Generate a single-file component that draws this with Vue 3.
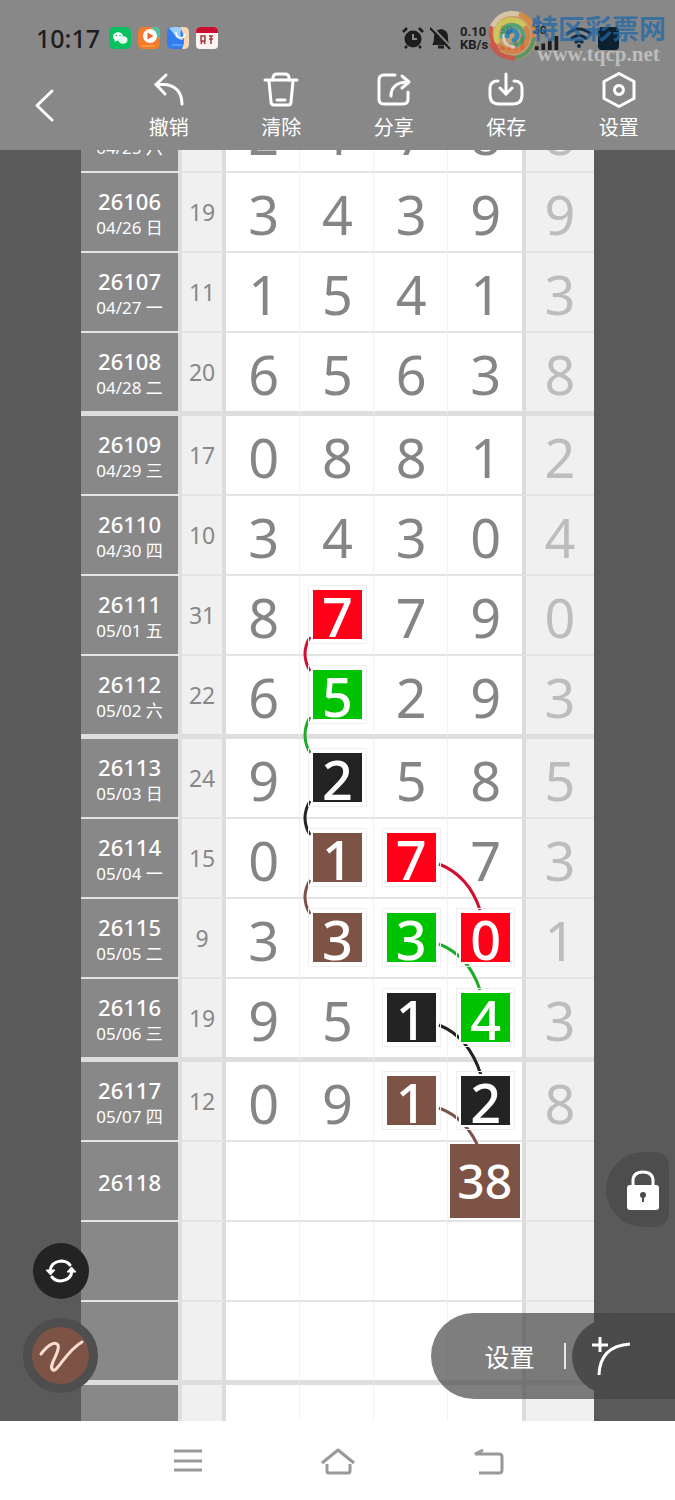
<script setup>
const tools = [
  { label: '撤销', paths: ['M15 3L5 12.5L14 22', 'M5 12.5H12C24 12.5 31 20 31 32'] },
  {
    label: '清除',
    paths: [
      'M2 8H34',
      'M10 8V6Q10 2 14 2H22Q26 2 26 6V8',
      'M6 9L8 30Q8.3 33 11 33H25Q28 33 28 30L30 9',
      'M14 28H22',
    ],
  },
  {
    label: '分享',
    paths: [
      'M19 3H8Q3 3 3 8V27Q3 32 8 32H27Q32 32 32 27V20',
      'M15 24C15 15 21 10 32 10',
      'M26 4L33 10L26 16',
    ],
  },
  {
    label: '保存',
    paths: ['M10 9Q2 9 2 16V23Q2 32 11 32H25Q34 32 34 23V16Q34 9 26 9', 'M18 2V22', 'M12 16L18 22L24 16'],
  },
  {
    label: '设置',
    paths: ['M18 1.5L33 9.5V26.5L18 34.5L3 26.5V9.5Z', 'M18 13.5A4.5 4.5 0 1 1 17.9 13.5Z'],
  },
]

const raw = [
  ['26105', '04/25 六', '', '2', '1', '7', '8', '8'],
  ['26106', '04/26 日', '19', '3', '4', '3', '9', '9'],
  ['26107', '04/27 一', '11', '1', '5', '4', '1', '3'],
  ['26108', '04/28 二', '20', '6', '5', '6', '3', '8'],
  ['26109', '04/29 三', '17', '0', '8', '8', '1', '2'],
  ['26110', '04/30 四', '10', '3', '4', '3', '0', '4'],
  ['26111', '05/01 五', '31', '8', '7', '7', '9', '0'],
  ['26112', '05/02 六', '22', '6', '5', '2', '9', '3'],
  ['26113', '05/03 日', '24', '9', '2', '5', '8', '5'],
  ['26114', '05/04 一', '15', '0', '1', '7', '7', '3'],
  ['26115', '05/05 二', '9', '3', '3', '3', '0', '1'],
  ['26116', '05/06 三', '19', '9', '5', '1', '4', '3'],
  ['26117', '05/07 四', '12', '0', '9', '1', '2', '8'],
  ['26118', '', '', '', '', '', '', ''],
  ['', '', '', '', '', '', '', ''],
  ['', '', '', '', '', '', '', ''],
  ['', '', '', '', '', '', '', ''],
]

const marks = {
  '26111-1': 'red',
  '26112-1': 'green',
  '26113-1': 'black',
  '26114-1': 'brown',
  '26114-2': 'red',
  '26115-1': 'brown',
  '26115-2': 'green',
  '26115-3': 'red',
  '26116-2': 'black',
  '26116-3': 'green',
  '26117-2': 'brown',
  '26117-3': 'black',
}

const rows = raw.map(([issue, date, sum, ...digits], i) => ({
  issue,
  date,
  sum,
  tail: digits[4],
  cells: digits.slice(0, 4).map((value, c) => ({ value, mark: marks[issue + '-' + c] })),
  thick: i % 4 === 3,
}))

const links = [
  { tone: 'red', d: 'M229 544Q219 561 229 578' },
  { tone: 'green', d: 'M229 624Q219 642 229 660' },
  { tone: 'black', d: 'M229 708Q219 725 229 742' },
  { tone: 'brown', d: 'M229 787Q219 804 229 821' },
  { tone: 'red', d: 'M358 771Q388 783 399 817' },
  { tone: 'green', d: 'M358 851Q388 863 399 897' },
  { tone: 'black', d: 'M358 932Q388 944 400 982' },
  { tone: 'brown', d: 'M358 1015Q386 1025 399 1058' },
]
</script>

<template>
  <div class="screen">
    <header class="top">
      <div class="status">
        <span class="clock">10:17</span>
        <div class="apps">
          <svg viewBox="0 0 22 22">
            <rect width="22" height="22" rx="5" fill="#07c160" />
            <ellipse cx="9" cy="9.5" rx="5" ry="4.2" fill="#fff" />
            <ellipse cx="14" cy="13" rx="4.5" ry="3.7" fill="#e2f8ea" />
            <path d="M6 12L5.500 15L9 13Z" fill="#fff" />
            <circle cx="7.500" cy="8.500" r=".8" fill="#07c160" />
            <circle cx="11" cy="8.500" r=".8" fill="#07c160" />
          </svg>
          <svg viewBox="0 0 22 22">
            <rect width="22" height="22" rx="5" fill="#f47a2c" />
            <path d="M13 0H17Q22 0 22 5V13Z" fill="#4fc3a1" />
            <circle cx="12" cy="9" r="7" fill="#fff" />
            <path d="M9.500 5.500L15.500 9L9.500 12.500Z" fill="#f0642c" />
            <path d="M4 19H17" stroke="#f79a3c" stroke-width="2" />
          </svg>
          <svg viewBox="0 0 22 22">
            <rect width="22" height="22" rx="5" fill="#2f7df0" />
            <path d="M13 0H17Q22 0 22 5V17Q22 22 17 22H15Q20 12 13 0Z" fill="#f6d7b4" />
            <path d="M2 1Q9 -1 15 1Q11 9 17 13Q10 13 7 7Z" fill="#9ed0ff" />
            <path d="M9 5Q9 11 14 11Q17 11 18 7" fill="none" stroke="#fff" stroke-width="1.500" />
            <path d="M5 18H15" stroke="#6fa8f4" stroke-width="1.500" />
          </svg>
          <svg viewBox="0 0 22 22">
            <rect width="22" height="22" rx="4" fill="#fff4f2" />
            <path d="M0 6V4Q0 0 4 0H18Q22 0 22 4V6Z" fill="#c8102e" />
            <path d="M5 9H9V14H5ZM13 9H17M13 12H17M15 9V17M5 17L6 14M9 17L8 14" fill="none" stroke="#a23a3a" stroke-width="1.500" />
          </svg>
        </div>
        <div class="signals">
          <svg class="glyph" viewBox="0 0 22 24">
            <circle cx="11" cy="13" r="8.500" fill="#1d1d1d" />
            <path d="M1 6L5 2M21 6L17 2M5 20L3 22M17 20L19 22" stroke="#1d1d1d" stroke-width="2.500" />
            <path d="M11 8V13H15" fill="none" stroke="#888" stroke-width="2" />
          </svg>
          <svg class="glyph" viewBox="0 0 22 24">
            <path d="M2 19Q4 17 4 11Q4 4 11 3Q18 4 18 11Q18 17 20 19Z" fill="#1d1d1d" />
            <path d="M8 21H14" stroke="#1d1d1d" stroke-width="3" />
            <path d="M2 1L22 22" stroke="#888" stroke-width="2" />
            <path d="M0 2L20 23" stroke="#1d1d1d" stroke-width="2" />
          </svg>
          <span class="speed">0.10<br />KB/s</span>
          <span class="net">
            <small>5G</small>
            <svg viewBox="0 0 26 16"><path d="M2 16V12M9 16V9M16 16V6M23 16V1" stroke="#a8262e" stroke-width="4" /></svg>
          </span>
          <span class="net">
            <small>5G</small>
            <svg viewBox="0 0 26 16"><path d="M2 16V12M9 16V9M16 16V6M23 16V1" stroke="#1d1d1d" stroke-width="4" /></svg>
          </span>
          <svg class="wifi" viewBox="0 0 26 22">
            <path d="M1 7Q13 -3 25 7M5 12Q13 5 21 12M9 16Q13 12 17 16" fill="none" stroke="#142c40" stroke-width="3" />
            <circle cx="13" cy="19" r="2" fill="#142c40" />
          </svg>
          <span class="battery"></span>
        </div>
      </div>

      <div class="brand">
        <svg viewBox="0 0 50 50">
          <circle cx="25" cy="25" r="24" fill="#d9a868" />
          <g fill="none" stroke-linecap="round">
            <path d="M5 14Q15 -2 33 4" stroke="#f0d8b0" stroke-width="5" />
            <path d="M33 4Q48 11 46 28" stroke="#f08a2c" stroke-width="5" />
            <path d="M46 28Q42 45 25 47" stroke="#4f9a58" stroke-width="4" />
            <path d="M4 34Q10 46 25 47" stroke="#d84a38" stroke-width="5" />
            <path d="M3 17Q1 30 10 38" stroke="#e24a3a" stroke-width="4" />
            <path d="M9 30Q5 14 20 9Q32 8 38 17" stroke="#e4dc4c" stroke-width="5" />
            <path d="M38 17Q44 31 30 40Q18 42 12 35" stroke="#e8823a" stroke-width="5" />
            <path d="M14 26Q14 14 25 14Q36 16 35 27Q32 36 22 34" stroke="#3fae72" stroke-width="4" />
            <path d="M16 24Q14 34 26 36" stroke="#f3e8ce" stroke-width="3" />
            <path d="M19 25Q20 17 27 20Q32 25 26 29" stroke="#1f86c4" stroke-width="5" />
          </g>
        </svg>
        <div class="brand-text">
          <strong>特区彩票网</strong>
          <span>www.tqcp.net</span>
        </div>
      </div>

      <nav class="tools">
        <button class="back" aria-label="返回">
          <svg viewBox="0 0 36 36"><path d="M24 4L9 18.500L24 33" /></svg>
        </button>
        <button v-for="tool in tools" :key="tool.label" class="tool">
          <svg viewBox="0 0 36 36"><path v-for="d in tool.paths" :key="d" :d="d" /></svg>
          <span>{{ tool.label }}</span>
        </button>
      </nav>
    </header>

    <main class="stage">
      <div class="board">
        <table>
          <colgroup>
            <col class="c-issue" />
            <col class="c-sum" />
            <col class="c-digit" span="3" />
            <col class="c-last" />
            <col class="c-tail" />
          </colgroup>
          <tbody>
            <tr v-for="(row, i) in rows" :key="i" :class="{ thick: row.thick }">
              <th scope="row">
                <div class="issue">{{ row.issue }}</div>
                <div v-if="row.date" class="date">{{ row.date }}</div>
              </th>
              <td class="sum">{{ row.sum }}</td>
              <td v-for="(cell, c) in row.cells" :key="c" class="digit">
                <span v-if="cell.mark" class="tile" :class="cell.mark">{{ cell.value }}</span>
                <span v-else-if="row.issue === '26118' && c === 3" class="pick">38</span>
                <template v-else>{{ cell.value }}</template>
              </td>
              <td class="tail">{{ row.tail }}</td>
            </tr>
          </tbody>
        </table>
        <svg class="links" viewBox="0 0 513 1372" preserveAspectRatio="none">
          <path v-for="link in links" :key="link.d" :class="link.tone" :d="link.d" />
        </svg>
      </div>

      <button class="lock" aria-label="锁定">
        <svg viewBox="0 0 34 42">
          <path d="M7 18V12Q7 3 17 3Q27 3 27 12V18" fill="none" stroke="#fff" stroke-width="3" />
          <rect x="1" y="16" width="32" height="25" rx="3" fill="#fff" />
          <circle cx="17" cy="26" r="3" fill="#4d4d4d" />
          <path d="M17 27V33" stroke="#4d4d4d" stroke-width="2" />
        </svg>
      </button>

      <div class="left-actions">
        <button class="swap" aria-label="切换">
          <svg viewBox="0 0 32 28">
            <path d="M5 14Q6 5 16 4Q22 4 25 8M27 14Q26 23 16 24Q10 24 7 20" fill="none" stroke="#fff" stroke-width="3" stroke-linecap="round" />
            <path d="M1 13H10L5.500 18ZM22 15H31L26.500 10Z" fill="#fff" stroke="#fff" stroke-linejoin="round" />
          </svg>
        </button>
        <button class="pen" aria-label="画笔">
          <svg viewBox="0 0 56 56">
            <path d="M8 26C14 18 22 12 25 17C28 24 14 38 20 42C25 44 32 24 49 14" fill="none" stroke="#fbdcd2" stroke-width="3" stroke-linecap="round" />
          </svg>
        </button>
      </div>

      <div class="panel">
        <button class="panel-set">设置</button>
        <button class="curve" aria-label="曲线">
          <svg viewBox="0 0 42 42">
            <path d="M11 2V17M3 10H19M10 40Q11 11 41 9" fill="none" stroke="#fff" stroke-width="3" />
          </svg>
        </button>
      </div>
    </main>

    <footer class="system">
      <button aria-label="菜单">
        <svg viewBox="0 0 36 30"><path d="M4 5H32M4 15H32M4 24H32" /></svg>
      </button>
      <button aria-label="主页">
        <svg viewBox="0 0 36 30"><path d="M2 17L18 4L34 17M7 18V25Q7 27 9 27H28Q30 27 30 25V18" stroke-linejoin="round" /></svg>
      </button>
      <button aria-label="后退">
        <svg viewBox="0 0 36 30"><path d="M13 4L5 8H29Q32 8 32 11V24Q32 27 29 27H9" /></svg>
      </button>
    </footer>
  </div>
</template>

<style>
body {
  margin: 0;
}
</style>

<style scoped>
.screen {
  display: flex;
  flex-direction: column;
  height: 100vh;
  overflow: hidden;
  background: #fff;
  font-family: "Noto Sans", "Noto Sans CJK SC", sans-serif;
}
button {
  display: flex;
  align-items: center;
  justify-content: center;
  padding: 0;
  border: 0;
  background: none;
  color: #fff;
  font-family: "Noto Sans CJK SC", sans-serif;
}
.top {
  position: relative;
  flex: none;
  height: 150px;
  background: #888;
}
.status {
  display: flex;
  align-items: center;
  height: 64px;
  padding: 12px 56px 0 36px;
  box-sizing: border-box;
  color: #1d1d1d;
}
.clock {
  width: 65px;
  font: 500 25px/26px "Noto Sans", sans-serif;
}
.apps {
  display: flex;
  gap: 7px;
  margin-left: 8px;
}
.apps svg {
  width: 22px;
  height: 22px;
}
.signals {
  display: flex;
  align-items: center;
  gap: 6px;
  margin-left: auto;
}
.glyph {
  width: 22px;
  height: 24px;
}
.speed {
  width: 32px;
  margin-left: 2px;
  font: 700 13px/13px Roboto, sans-serif;
}
.net {
  display: flex;
  flex-direction: column;
  width: 26px;
  margin-left: 2px;
}
.net small {
  font: 700 10px/9px Roboto, sans-serif;
}
.net svg {
  height: 15px;
}
.wifi {
  width: 26px;
  height: 22px;
}
.battery {
  width: 21px;
  height: 23px;
  border-radius: 4px;
  background: #0c2030;
}
.brand {
  position: absolute;
  top: 10px;
  right: 9px;
  display: flex;
  opacity: 0.75;
}
.brand > svg {
  width: 50px;
  height: 52px;
}
.brand-text {
  display: flex;
  flex-direction: column;
  align-items: center;
  margin-left: -7px;
}
.brand strong {
  color: #2268a6;
  font: 700 27px/36px "Noto Sans CJK SC", sans-serif;
}
.brand span {
  color: #cfcfcf;
  font: 700 21px/16px "Liberation Serif", serif;
}
.tools {
  display: grid;
  grid-template-columns: repeat(6, 1fr);
  padding-top: 8px;
}
.tools svg {
  width: 36px;
  height: 36px;
  fill: none;
  stroke: #fff;
  stroke-width: 3;
  stroke-linecap: round;
  stroke-linejoin: round;
}
.back {
  justify-content: flex-start;
  height: 66px;
  padding-left: 28px;
}
.tool {
  flex-direction: column;
  gap: 5px;
  font-size: 20px;
  line-height: 28px;
}
.stage {
  position: relative;
  flex: 1;
  min-height: 0;
  overflow: hidden;
  background: #5a5a5a;
}
.board {
  position: relative;
  width: 76%;
  margin: -57px auto 0;
}
table {
  width: 100%;
  table-layout: fixed;
  border-spacing: 0;
  background: #fff;
}
.c-issue {
  width: 19.7%;
}
.c-sum {
  width: 8.6%;
}
.c-digit {
  width: 14.4%;
}
.c-last {
  width: 15.2%;
}
tr {
  height: 80px;
}
tr.thick {
  height: 83px;
}
th,
td {
  box-sizing: border-box;
  padding: 0;
  border-bottom: 2px solid #e4e4e4;
  text-align: center;
  vertical-align: middle;
}
.thick th,
.thick td {
  border-bottom: 5px solid #dedede;
}
th {
  padding-top: 2px;
  border-right: 4px solid #dedede;
  background: #888;
  color: #fff;
  font-weight: 400;
}
.issue {
  font-size: 22px;
  font-weight: 500;
  line-height: 28px;
}
.date {
  font-size: 17px;
  line-height: 25px;
}
.sum {
  border-right: 4px solid #dcdcdc;
  background: #f0f0f0;
  color: #888;
  font-size: 23px;
}
.digit,
.tail {
  padding-top: 4px;
  font-size: 54px;
  line-height: 54px;
}
.digit {
  position: relative;
  padding-left: 2px;
  border-right: 1px solid #f2f2f2;
  color: #858585;
}
.digit:nth-child(6) {
  border-right: 4px solid #dcdcdc;
}
.tail {
  background: #f0f0f0;
  color: #bdbdbd;
}
.tile {
  position: relative;
  z-index: 2;
  display: block;
  width: 49px;
  height: 49px;
  margin: -6px auto 0;
  border: 2px solid #fff;
  outline: 1px solid #efefef;
  outline-offset: 2px;
  color: #fff;
  font-weight: 500;
  line-height: 53px;
}
.tile.red {
  background: #ff0018;
}
.tile.green {
  background: #00c300;
}
.tile.black {
  background: #232323;
}
.tile.brown,
.pick {
  background: #7c5344;
}
.pick {
  position: absolute;
  z-index: 2;
  inset: 2px;
  display: flex;
  align-items: center;
  justify-content: center;
  color: #fff;
  font-size: 48px;
  font-weight: 500;
}
.links {
  position: absolute;
  top: 0;
  left: 0;
  z-index: 1;
  width: 100%;
  height: 1372px;
  fill: none;
  stroke-width: 3;
}
.links .red {
  stroke: #d01030;
}
.links .green {
  stroke: #1eac28;
}
.links .black {
  stroke: #232323;
}
.links .brown {
  stroke: #7c5349;
}
.lock {
  position: absolute;
  right: 6px;
  bottom: 194px;
  z-index: 3;
  width: 63px;
  height: 75px;
  padding-left: 11px;
  border-radius: 38px 14px 14px 38px;
  background: #4d4d4d;
}
.lock svg {
  width: 34px;
  height: 42px;
}
.left-actions {
  position: absolute;
  left: 23px;
  bottom: 28px;
  z-index: 3;
  display: flex;
  flex-direction: column;
  align-items: center;
  gap: 19px;
}
.swap {
  width: 56px;
  height: 56px;
  border-radius: 50%;
  background: #232323;
}
.swap svg {
  width: 32px;
  height: 28px;
}
.pen {
  width: 75px;
  height: 75px;
  border: 9px solid #4e4e4e;
  border-radius: 50%;
  background: #7c5344;
}
.pen svg {
  flex: none;
  width: 56px;
  height: 56px;
}
.panel {
  position: absolute;
  right: 0;
  bottom: 22px;
  z-index: 3;
  display: flex;
  align-items: center;
  width: 244px;
  height: 86px;
  border-radius: 43px 0 0 43px;
  background: rgba(67, 67, 67, 0.68);
}
.panel-set {
  box-sizing: border-box;
  width: 82px;
  height: 26px;
  margin-left: 53px;
  padding-right: 29px;
  border-right: 2px solid #e8e8e8;
  font-size: 25px;
  white-space: nowrap;
}
.curve {
  width: 75px;
  height: 75px;
  margin-left: 6px;
  border-radius: 50%;
  background: linear-gradient(90deg, #4b4b4b 50%, rgba(75, 75, 75, 0));
}
.curve svg {
  width: 42px;
  height: 42px;
}
.system {
  display: flex;
  flex: none;
  justify-content: center;
  height: 79px;
  background: #fff;
}
.system button {
  width: 150px;
}
.system svg {
  width: 36px;
  height: 30px;
  fill: none;
  stroke: #999;
  stroke-width: 3;
}
</style>
